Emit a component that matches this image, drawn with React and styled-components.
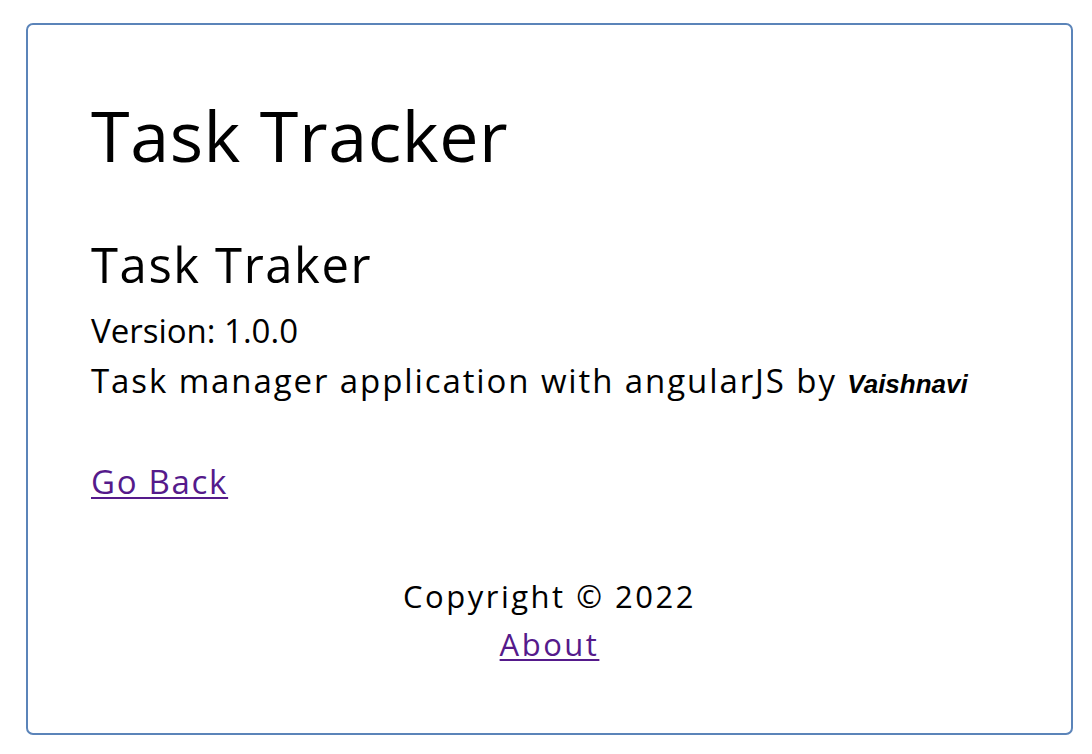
import styled, {createGlobalStyle} from "styled-components";

const GlobalStyle = createGlobalStyle`
  body {
    margin: 8px;
    background: #ffffff;
    font-family: "Open Sans", "Liberation Sans", sans-serif;
    color: #000000;
  }
`;

const Card = styled.div`
  box-sizing: border-box;
  height: 712px;
  margin: 15px 11px 0 18px;
  padding: 68px 63px 0;
  border: 2px solid #5b84b9;
  border-radius: 7px;
`;

const Title = styled.h1`
  margin: 0;
  font-size: 70px;
  line-height: 84px;
  font-weight: 400;
  letter-spacing: 0.6px;
`;

const AppName = styled.h2`
  margin: 57px 0 0;
  font-size: 49px;
  line-height: 60px;
  font-weight: 400;
  letter-spacing: 1.6px;
`;

const Info = styled.div`
  margin-top: 12px;
  font-size: 33px;
  line-height: 50px;
`;

const InfoLine = styled.p`
  margin: 0;
  letter-spacing: ${props => props.$spacing || 0}px;
`;

const Author = styled.span`
  font-family: "Liberation Sans", Arial, sans-serif;
  font-size: 26px;
  font-weight: 700;
  font-style: italic;
  letter-spacing: 0;
`;

const TextLink = styled.a`
  color: #551a8b;
  text-decoration: underline;
  text-decoration-thickness: 2px;
  text-underline-offset: 3px;
  cursor: pointer;
`;

const BackRow = styled.div`
  margin-top: 48px;
  font-size: 33px;
  line-height: 50px;
  letter-spacing: 1.7px;
`;

const Footer = styled.footer`
  margin-top: 65px;
  text-align: center;
  font-size: 31px;
  line-height: 48px;
  letter-spacing: 2.5px;
`;

export default function App() {
    return (
        <>
            <GlobalStyle/>
            <Card>
                <Title>Task Tracker</Title>
                <AppName>Task Traker</AppName>
                <Info>
                    <InfoLine>Version: 1.0.0</InfoLine>
                    <InfoLine $spacing={1.9}>
                        Task manager application with angularJS by <Author>Vaishnavi</Author>
                    </InfoLine>
                </Info>
                <BackRow>
                    <TextLink href="#/">Go Back</TextLink>
                </BackRow>
                <Footer>
                    <div>Copyright &copy; 2022</div>
                    <TextLink href="#/about">About</TextLink>
                </Footer>
            </Card>
        </>
    )
}
